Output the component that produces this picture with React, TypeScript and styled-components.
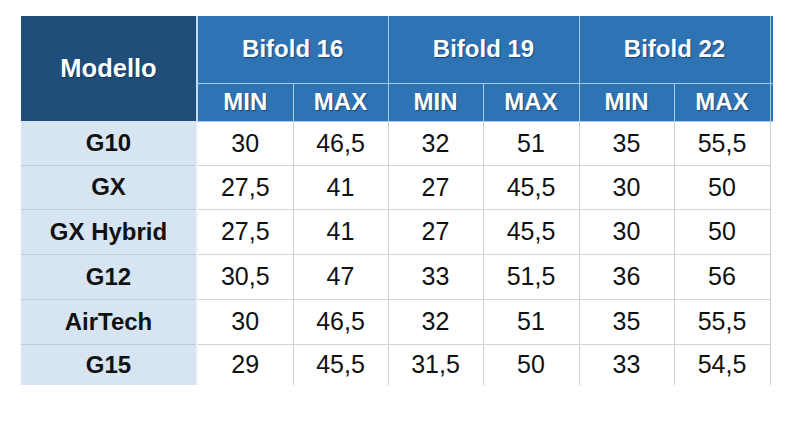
import React from "react";
import styled, { createGlobalStyle } from "styled-components";

const Global = createGlobalStyle`
  html, body { margin: 0; padding: 0; background: #ffffff; }
  body { font-family: "Liberation Sans", Arial, sans-serif; }
`;

const Page = styled.div`
  width: 800px;
  height: 427px;
  padding: 16px 0 0 21px;
  box-sizing: border-box;
  background: #ffffff;
  overflow: hidden;
`;

const Table = styled.table`
  border-collapse: collapse;
  table-layout: fixed;
  width: 752px;
  font-family: "Liberation Sans", Arial, sans-serif;
`;

const HeadCell = styled.th<{ $dark?: boolean; $h: number; $wideRight?: boolean; $sliver?: boolean }>`
  height: ${(p) => p.$h}px;
  padding: 0;
  background: ${(p) => (p.$dark ? "#1f4e7a" : "#2e74b5")};
  color: #ffffff;
  font-size: ${(p) => (p.$dark ? "25.5px" : "24px")};
  font-weight: bold;
  text-align: center;
  vertical-align: middle;
  text-shadow: 1px 1px 1px rgba(10, 30, 60, 0.55);
  border: 1px solid #a9c9e8;
  border-top: none;
  border-left: ${(p) => (p.$dark ? "none" : "1px solid #a9c9e8")};
  border-right: ${(p) => (p.$wideRight ? "2px solid #c6dcf0" : p.$sliver ? "none" : "1px solid #a9c9e8")};
  ${(p) => (p.$dark ? "border-bottom: none;" : "")}
  box-sizing: border-box;
`;

const ModelCell = styled.td<{ $h: number }>`
  height: ${(p) => p.$h}px;
  padding: 0;
  background: #d7e4f1;
  color: #111111;
  font-size: 24px;
  font-weight: bold;
  text-align: center;
  vertical-align: middle;
  border-bottom: 1px solid #bdcad8;
  border-right: 2px solid #eef3f8;
  box-sizing: border-box;
`;

const ValueCell = styled.td<{ $h: number; $sliver?: boolean }>`
  height: ${(p) => p.$h}px;
  padding: 0;
  background: #ffffff;
  color: #111111;
  font-size: 25px;
  text-align: center;
  vertical-align: middle;
  border-left: 1px solid #cfcfcf;
  border-bottom: 1px solid #d4d4d4;
  ${(p) => (p.$sliver ? "border-bottom: none;" : "")}
  box-sizing: border-box;
`;

const LastRow = styled.tr`
  & > td { border-bottom: none; }
`;

const rows: [string, string[]][] = [
  ["G10", ["30", "46,5", "32", "51", "35", "55,5"]],
  ["GX", ["27,5", "41", "27", "45,5", "30", "50"]],
  ["GX Hybrid", ["27,5", "41", "27", "45,5", "30", "50"]],
  ["G12", ["30,5", "47", "33", "51,5", "36", "56"]],
  ["AirTech", ["30", "46,5", "32", "51", "35", "55,5"]],
  ["G15", ["29", "45,5", "31,5", "50", "33", "54,5"]],
];

const heights = [44, 44, 45, 45, 45, 41];
const colWidths = [176, 96, 95, 95, 96, 95, 96, 3];

export default function App() {
  return (
    <Page>
      <Global />
      <Table>
        <colgroup>
          {colWidths.map((w, i) => (
            <col key={i} style={{ width: w }} />
          ))}
        </colgroup>
        <thead>
          <tr>
            <HeadCell $dark $wideRight rowSpan={2} $h={67}>
              Modello
            </HeadCell>
            <HeadCell colSpan={2} $h={67}>Bifold 16</HeadCell>
            <HeadCell colSpan={2} $h={67}>Bifold 19</HeadCell>
            <HeadCell colSpan={2} $h={67}>Bifold 22</HeadCell>
            <HeadCell $sliver $h={67}></HeadCell>
          </tr>
          <tr>
            {["MIN", "MAX", "MIN", "MAX", "MIN", "MAX"].map((t, i) => (
              <HeadCell key={i} $h={38}>{t}</HeadCell>
            ))}
            <HeadCell $sliver $h={38}></HeadCell>
          </tr>
        </thead>
        <tbody>
          {rows.map(([name, vals], r) => {
            const Row = r === rows.length - 1 ? LastRow : "tr";
            return (
              <Row key={name}>
                <ModelCell $h={heights[r]}>{name}</ModelCell>
                {vals.map((v, i) => (
                  <ValueCell key={i} $h={heights[r]}>{v}</ValueCell>
                ))}
                <ValueCell $sliver $h={heights[r]}></ValueCell>
              </Row>
            );
          })}
        </tbody>
      </Table>
    </Page>
  );
}
